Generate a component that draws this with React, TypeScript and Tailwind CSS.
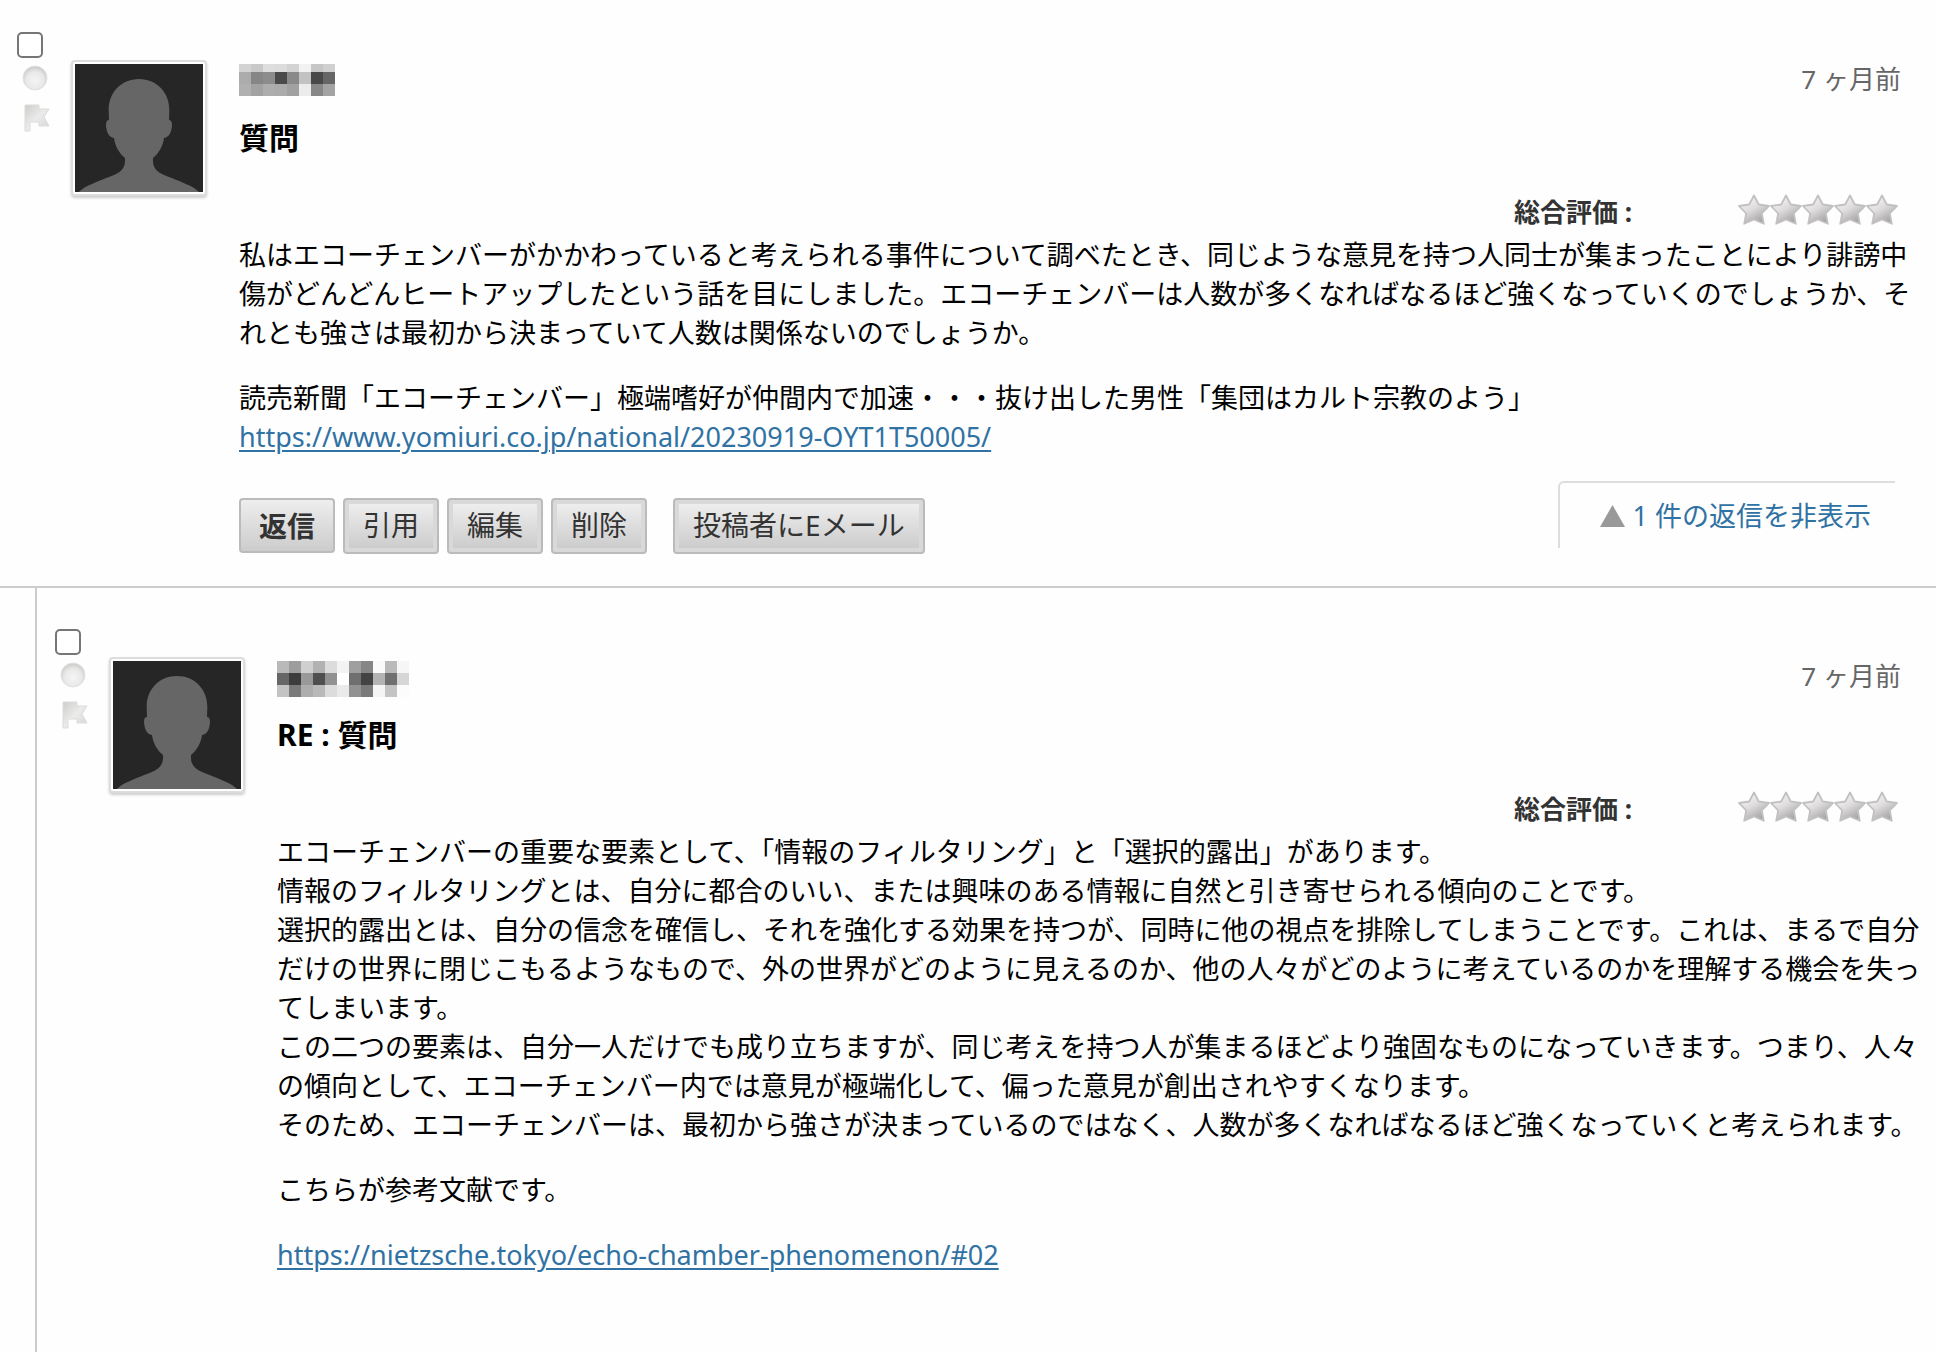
import type { ReactNode } from "react";

const CELLS_A = {
  heights: ["h-2", "h-3", "h-3"],
  rows: [
    ["#d3d3d3", "#c9c9c9", "#dedede", "#dcdcdc", "#d3d3d3", "#f2f2f2", "#c6c6c6", "#d0d0d0"],
    ["#acacac", "#868686", "#8c8c8c", "#4a4a4a", "#898989", "#c2c2c2", "#484848", "#666666"],
    ["#b0b0b0", "#a2a2a2", "#adadad", "#ababab", "#a1a1a1", "#ececec", "#878787", "#a3a3a3"],
  ],
};

const CELLS_B = {
  heights: ["h-3", "h-3", "h-3"],
  rows: [
    ["#b9b9b9", "#9d9d9d", "#cfcfcf", "#b2b2b2", "#dcdcdc", "#f3f3f3", "#9f9f9f", "#868686", "#fafafa", "#bababa", "#f6f6f6"],
    ["#666666", "#3c3c3c", "#999999", "#4f4f4f", "#919191", "#ffffff", "#6f6f6f", "#434343", "#b3b3b3", "#707070", "#d6d6d6"],
    ["#c3c3c3", "#7a7a7a", "#adadad", "#b9b9b9", "#dcdcdc", "#eaeaea", "#929292", "#7a7a7a", "#f5f5f5", "#c4c4c4", "#fcfcfc"],
  ],
};

function RedactedName({ cells }: { cells: typeof CELLS_A }) {
  return (
    <div aria-label="投稿者名" role="img">
      {cells.rows.map((row, r) => (
        <div key={r} className="flex">
          {row.map((color, c) => (
            <span key={c} className={`w-3 ${cells.heights[r]}`} style={{ backgroundColor: color }} />
          ))}
        </div>
      ))}
    </div>
  );
}

function Avatar() {
  return (
    <div className="h-[136px] w-[136px] shrink-0 rounded-[4px] border-2 border-[#dddddd] bg-white p-[2px] shadow-[0_2px_3px_rgba(0,0,0,0.2)]">
      <svg viewBox="0 0 128 128" className="block h-full w-full" aria-hidden="true">
        <rect width="128" height="128" fill="#262626" />
        <path
          fill="#666666"
          d="M64 15C46 15 33 29 33.700 47L34 56C31 56 30.500 60 31.500 65C32.500 70 35 73.500 39 74C40 82 44 89 50 94C50.500 102 48 106 42 109.500C32 114.500 10 121 4 128H124C118 121 96 114.500 86 109.500C80 106 77.500 102 78 94C84 89 88 82 89 74C93 73.500 95.500 70 96.500 65C97.500 60 97 56 94 56L94.300 47C95 29 82 15 64 15Z"
        />
      </svg>
    </div>
  );
}

function StatusIcons() {
  return (
    <>
      <svg width="28" height="28" viewBox="0 0 28 28" aria-hidden="true">
        <defs>
          <radialGradient id="dot" cx="0.5" cy="0.6" r="0.55">
            <stop offset="0" stopColor="#f5f5f5" />
            <stop offset="0.65" stopColor="#e9e9e9" />
            <stop offset="1" stopColor="#cececc" />
          </radialGradient>
        </defs>
        <circle cx="14" cy="14" r="12" fill="url(#dot)" stroke="#e2e2e2" />
      </svg>
      <svg width="28" height="28" viewBox="0 0 28 28" className="mt-3 ml-[3px]" aria-hidden="true">
        <defs>
          <linearGradient id="flag" x1="0" y1="0" x2="1" y2="1">
            <stop offset="0" stopColor="#cdcdcb" />
            <stop offset="0.5" stopColor="#ebebeb" />
            <stop offset="1" stopColor="#d4d4d4" />
          </linearGradient>
        </defs>
        <path d="M1 1H15V5H25L20 13L25 22H15V18H6V27H1Z" fill="url(#flag)" stroke="#dcdcda" strokeLinejoin="round" />
      </svg>
    </>
  );
}

function Stars() {
  return (
    <svg width="160" height="32" viewBox="0 0 160 32" role="img" aria-label="評価 0 / 5">
      <defs>
        <linearGradient id="star" x1="0" y1="0" x2="0.6" y2="1">
          <stop offset="0.2" stopColor="#f4f2f2" />
          <stop offset="0.55" stopColor="#dddbdb" />
          <stop offset="1" stopColor="#a5a3a3" />
        </linearGradient>
      </defs>
      {[0, 32, 64, 96, 128].map((x) => (
        <path
          key={x}
          transform={`translate(${x} 0)`}
          d="M16 1.500L20.800 10.500L31 12L23.800 19.500L25.800 29.800L16 25.500L6.200 29.800L8.200 19.500L1 12L11.200 10.500Z"
          fill="url(#star)"
          stroke="#c2c1c1"
          strokeWidth="1.800"
          strokeLinejoin="round"
        />
      ))}
    </svg>
  );
}

function ActionButton({ children, primary = false }: { children: ReactNode; primary?: boolean }) {
  return (
    <button
      type="button"
      className={`rounded-[4px] border-2 border-[#bbbbbb] text-[28px] leading-[42px] text-[#333333] ${
        primary
          ? "h-[55px] bg-linear-to-b from-[#eeeeee] to-[#cccccc] px-[18px] font-bold"
          : "h-[56px] bg-[#d9d9d9] p-1"
      }`}
    >
      {primary ? (
        children
      ) : (
        <span className="block h-full bg-linear-to-b from-[#eeeeee] to-[#cccccc] px-[14px]">{children}</span>
      )}
    </button>
  );
}

function Post({
  id,
  title,
  name,
  children,
}: {
  id: string;
  title: string;
  name: ReactNode;
  children: ReactNode;
}) {
  return (
    <article className="flex pt-8 pl-[17px]">
      <div className="flex w-[54px] shrink-0 flex-col">
        <input
          id={id}
          type="checkbox"
          aria-label={`${title} を選択`}
          className="mb-[6px] h-[26px] w-[26px] appearance-none rounded-[5px] border-2 border-[#767676] bg-white"
        />
        <div className="pl-1">
          <StatusIcons />
        </div>
      </div>
      <div className="pt-7">
        <Avatar />
      </div>
      <div className="min-w-0 flex-1 pt-7 pl-8">
        <header className="flex h-10 items-start justify-between pt-1 pr-[35px]">
          {name}
          <time className="text-[26px] leading-[30px] text-[#666666]">7 ヶ月前</time>
        </header>
        <h2 className="mt-4 text-[30px] leading-[44px] font-bold text-black">{title}</h2>
        <div className="mt-[34px] flex h-8 items-center justify-end pr-[38px]">
          <span className="w-56 pt-1 text-[26px] leading-8 font-bold text-[#333333]">総合評価 :</span>
          <Stars />
        </div>
        <div className="mt-[9px] flex flex-col gap-[26px] pr-[10px] text-[27px] leading-[39px] text-black">
          {children}
        </div>
      </div>
    </article>
  );
}

const linkClass = "text-[#3072a3] underline decoration-2 underline-offset-[3px]";

export default function App() {
  return (
    <main
      lang="ja"
      className="min-h-screen overflow-hidden bg-[#fefefe] font-['Noto_Sans','Noto_Sans_CJK_JP',sans-serif]"
    >
      <section className="border-b-2 border-[#cccccc] pb-8">
        <Post id="post-1" title="質問" name={<RedactedName cells={CELLS_A} />}>
          <p>
            私はエコーチェンバーがかかわっていると考えられる事件について調べたとき、同じような意見を持つ人同士が集まったことにより誹謗中傷がどんどんヒートアップしたという話を目にしました。エコーチェンバーは人数が多くなればなるほど強くなっていくのでしょうか、それとも強さは最初から決まっていて人数は関係ないのでしょうか。
          </p>
          <p>
            読売新聞「エコーチェンバー」極端嗜好が仲間内で加速・・・抜け出した男性「集団はカルト宗教のよう」
            <br />
            <a href="#yomiuri" className={linkClass}>
              https://www.yomiuri.co.jp/national/20230919-OYT1T50005/
            </a>
          </p>
        </Post>
        <div className="mt-[25px] flex items-start justify-between pr-[41px] pl-[239px]">
          <div className="flex items-start gap-2 pt-[17px]">
            <ActionButton primary>返信</ActionButton>
            <ActionButton>引用</ActionButton>
            <ActionButton>編集</ActionButton>
            <ActionButton>削除</ActionButton>
            <div className="pl-[18px]">
              <ActionButton>投稿者にEメール</ActionButton>
            </div>
          </div>
          <a
            href="#reply-1"
            className="flex h-[67px] items-center gap-2 rounded-tl-[6px] border-t-2 border-l-2 border-[#dddddd] pr-6 pl-10 text-[27px] leading-[39px] text-[#3072a3]"
          >
            <svg width="25" height="22" viewBox="0 0 25 22" aria-hidden="true">
              <path d="M12.500 0L25 22H0Z" fill="#999999" />
            </svg>
            1 件の返信を非表示
          </a>
        </div>
      </section>
      <section id="reply-1" className="ml-[35px] min-h-[764px] border-l-2 border-[#cccccc] pt-[9px] pl-px">
        <Post id="post-2" title="RE : 質問" name={<RedactedName cells={CELLS_B} />}>
          <p>
            エコーチェンバーの重要な要素として、「情報のフィルタリング」と「選択的露出」があります。
            <br />
            情報のフィルタリングとは、自分に都合のいい、または興味のある情報に自然と引き寄せられる傾向のことです。
            <br />
            選択的露出とは、自分の信念を確信し、それを強化する効果を持つが、同時に他の視点を排除してしまうことです。これは、まるで自分だけの世界に閉じこもるようなもので、外の世界がどのように見えるのか、他の人々がどのように考えているのかを理解する機会を失ってしまいます。
            <br />
            この二つの要素は、自分一人だけでも成り立ちますが、同じ考えを持つ人が集まるほどより強固なものになっていきます。つまり、人々の傾向として、エコーチェンバー内では意見が極端化して、偏った意見が創出されやすくなります。
            <br />
            そのため、エコーチェンバーは、最初から強さが決まっているのではなく、人数が多くなればなるほど強くなっていくと考えられます。
          </p>
          <p>こちらが参考文献です。</p>
          <p>
            <a href="#reference" className={linkClass}>
              https://nietzsche.tokyo/echo-chamber-phenomenon/#02
            </a>
          </p>
        </Post>
      </section>
    </main>
  );
}
